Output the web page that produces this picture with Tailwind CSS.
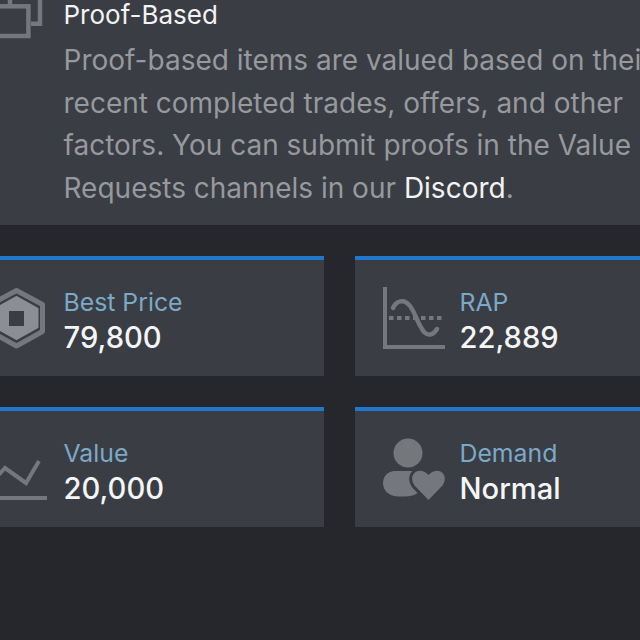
<!DOCTYPE html>
<html lang="en">
<head>
  <meta charset="UTF-8" />
  <meta name="viewport" content="width=device-width, initial-scale=1.0"/>
  <title>Item Details</title>
  <script src="https://cdn.jsdelivr.net/npm/@tailwindcss/browser@4"></script>
</head>
<body class="bg-[#25272c] font-['Inter','Noto_Sans',sans-serif]">
  <div class="h-[640px] w-[640px] overflow-hidden">
    <!-- info panel -->
    <section class="ml-[-41px] mt-[-20px] w-[761px] h-[245px] bg-[#3a3d43] pl-[28px] pt-[17px] flex gap-[14.5px]">
      <svg class="w-[62px] h-[62px] shrink-0 text-[#74777c]" viewBox="0 0 62 62" fill="none" stroke="currentColor" stroke-width="4.5">
        <path d="M23 0V8M53 0V26.700H44" />
        <rect x="2" y="9.300" width="39.400" height="29.700" />
      </svg>
      <div class="w-[640px] pt-[3px] whitespace-nowrap">
        <h3 class="text-[26px] leading-[30px] text-[#f2f3f4] font-normal">Proof-Based</h3>
        <p class="mt-[9px] text-[28px] leading-[42.6px] text-[#96999d]">
          Proof-based items are valued based on their<br>
          recent completed trades, offers, and other<br>
          factors. You can submit proofs in the Value<br>
          Requests channels in our <span class="text-[#f2f3f4]">Discord</span>.
        </p>
      </div>
    </section>

    <!-- stats -->
    <div class="ml-[-41px] mt-[31px] w-[761px] grid grid-cols-[365px_365px] gap-[31px]">
      <div class="h-[120px] bg-[#3a3d43] border-t-4 border-[#2177c9] pl-[28px] flex items-center gap-[14.5px]">
        <svg class="w-[62px] h-[62px] shrink-0" viewBox="0 0 62 62">
          <path fill="none" stroke="#74777c" stroke-width="5" stroke-linejoin="round" d="M29.500 3.500L55.500 17.500V44.500L29.500 59L3.500 44.500V17.500Z" />
          <path fill="#8b8e92" stroke="#8b8e92" stroke-width="3" stroke-linejoin="round" d="M29.500 10.500L50 22V40L29.500 51.500L9 40V22Z" />
          <rect x="22" y="24" width="15" height="15" fill="#3a3d43" />
        </svg>
        <div class="pt-[7px]">
          <div class="text-[24.8px] leading-[30px] text-[#7ba9c8]">Best Price</div>
          <div class="mt-[3.5px] text-[29.2px] leading-[36px] font-medium text-[#f4f5f6]">79,800</div>
        </div>
      </div>

      <div class="h-[120px] bg-[#3a3d43] border-t-4 border-[#2177c9] pl-[28px] flex items-center gap-[14.5px]">
        <svg class="w-[62px] h-[62px] shrink-0" viewBox="0 0 62 62" fill="none" stroke="#74777c">
          <path stroke-width="4" d="M2 0V60H62" />
          <path stroke-width="4" stroke-dasharray="4.5 3.5" d="M6 31H62" />
          <path stroke-width="4.500" stroke-linecap="round" d="M10 21C13 14 21 11 27 19C33 27 34 36 41 45C46 50 51 47 54 42" />
        </svg>
        <div class="pt-[7px]">
          <div class="text-[24.8px] leading-[30px] text-[#7ba9c8]">RAP</div>
          <div class="mt-[3.5px] text-[29.2px] leading-[36px] font-medium text-[#f4f5f6]">22,889</div>
        </div>
      </div>

      <div class="h-[120px] bg-[#3a3d43] border-t-4 border-[#2177c9] pl-[28px] flex items-center gap-[14.5px]">
        <svg class="w-[62px] h-[62px] shrink-0" viewBox="0 0 62 62" fill="none" stroke="#74777c" stroke-width="4">
          <path d="M0 60H60" />
          <path d="M6 43L18 30L39 45L52 23" />
        </svg>
        <div class="pt-[7px]">
          <div class="text-[24.8px] leading-[30px] text-[#7ba9c8]">Value</div>
          <div class="mt-[3.5px] text-[29.2px] leading-[36px] font-medium text-[#f4f5f6]">20,000</div>
        </div>
      </div>

      <div class="h-[120px] bg-[#3a3d43] border-t-4 border-[#2177c9] pl-[28px] flex items-center gap-[14.5px]">
        <svg class="w-[62px] h-[62px] shrink-0" viewBox="0 0 62 62" fill="#74777c">
          <circle cx="25" cy="15" r="14.500" />
          <path d="M12 33H36C40 33 42 40 40 50C34 58 26 59 15 58.500C5 58 0 52 0 45C0 38 5 33 12 33Z" />
          <path stroke="#3a3d43" stroke-width="6" paint-order="stroke" d="M45.500 62L31.500 47.500C24 37 36 27 45.500 37C55 27 67 37 59.500 47.500Z" />
        </svg>
        <div class="pt-[7px]">
          <div class="text-[24.8px] leading-[30px] text-[#7ba9c8]">Demand</div>
          <div class="mt-[3.5px] text-[29.2px] leading-[36px] font-medium text-[#f4f5f6]">Normal</div>
        </div>
      </div>
    </div>
  </div>
</body>
</html>
